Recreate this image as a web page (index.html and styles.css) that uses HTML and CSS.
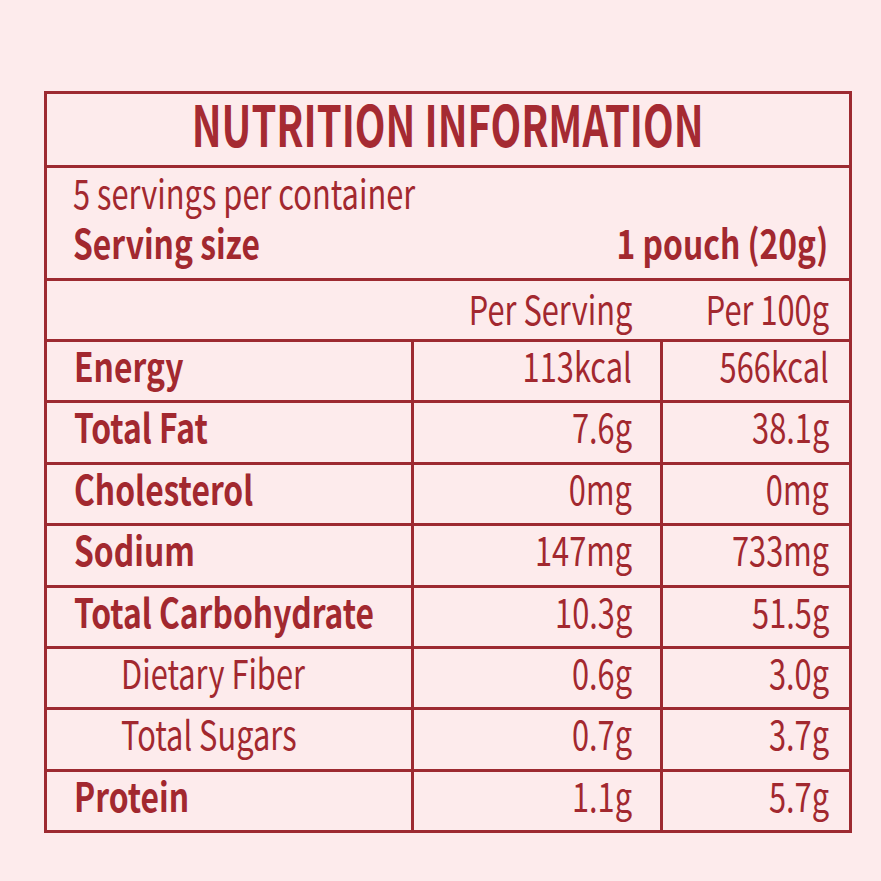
FILE: index.html
```html
<!DOCTYPE html>
<html lang="en">
<head>
<meta charset="utf-8">
<title>Nutrition Information</title>
<link rel="stylesheet" href="styles.css">
</head>
<body>
<main class="label">
  <h1 class="title"><span class="sq sq-center">NUTRITION INFORMATION</span></h1>
  <section class="serving">
    <p class="serving-line"><span class="sq">5 servings per container</span></p>
    <p class="serving-line size"><span class="sq strong">Serving size</span><span class="sq sq-right strong">1 pouch (20g)</span></p>
  </section>
  <div class="facts">
    <div class="cell head"></div>
    <div class="cell head num"><span class="sq sq-right">Per Serving</span></div>
    <div class="cell head num last"><span class="sq sq-right">Per 100g</span></div>

    <div class="cell name"><span class="sq strong">Energy</span></div>
    <div class="cell num line"><span class="sq sq-right">113kcal</span></div>
    <div class="cell num line last"><span class="sq sq-right">566kcal</span></div>

    <div class="cell name"><span class="sq strong">Total Fat</span></div>
    <div class="cell num line"><span class="sq sq-right">7.6g</span></div>
    <div class="cell num line last"><span class="sq sq-right">38.1g</span></div>

    <div class="cell name"><span class="sq strong">Cholesterol</span></div>
    <div class="cell num line"><span class="sq sq-right">0mg</span></div>
    <div class="cell num line last"><span class="sq sq-right">0mg</span></div>

    <div class="cell name"><span class="sq strong">Sodium</span></div>
    <div class="cell num line"><span class="sq sq-right">147mg</span></div>
    <div class="cell num line last"><span class="sq sq-right">733mg</span></div>

    <div class="cell name"><span class="sq strong">Total Carbohydrate</span></div>
    <div class="cell num line"><span class="sq sq-right">10.3g</span></div>
    <div class="cell num line last"><span class="sq sq-right">51.5g</span></div>

    <div class="cell name sub"><span class="sq">Dietary Fiber</span></div>
    <div class="cell num line"><span class="sq sq-right">0.6g</span></div>
    <div class="cell num line last"><span class="sq sq-right">3.0g</span></div>

    <div class="cell name sub"><span class="sq">Total Sugars</span></div>
    <div class="cell num line"><span class="sq sq-right">0.7g</span></div>
    <div class="cell num line last"><span class="sq sq-right">3.7g</span></div>

    <div class="cell name"><span class="sq strong">Protein</span></div>
    <div class="cell num line"><span class="sq sq-right">1.1g</span></div>
    <div class="cell num line last"><span class="sq sq-right">5.7g</span></div>
  </div>
</main>
</body>
</html>
```
FILE: styles.css
```css
html, body {
  margin: 0;
  padding: 0;
  background: #fdebec;
}

body {
  font-family: "Noto Sans CJK SC", "Noto Sans", sans-serif;
  color: #a2282f;
}

.label {
  box-sizing: border-box;
  width: 808px;
  margin: 91px 0 0 44px;
  border: 3px solid #9d2a31;
}

.sq {
  display: inline-block;
  white-space: nowrap;
  line-height: 1;
  transform: scaleX(0.77);
  transform-origin: left center;
}

.sq.strong {
  font-weight: 700;
  transform: scaleX(0.795);
}

.sq-right,
.sq.sq-right {
  transform-origin: right center;
}

.sq-center {
  transform-origin: center center;
}

.title {
  box-sizing: border-box;
  height: 71px;
  margin: 0;
  display: flex;
  justify-content: center;
  align-items: flex-start;
  font-size: 57px;
  line-height: 58px;
  font-weight: 700;
  color: #a52a32;
}

.title .sq {
  transform: scaleX(0.70);
}

.serving {
  box-sizing: border-box;
  height: 113px;
  border-top: 3px solid #9d2a31;
  padding: 0 21px 0 26px;
  font-size: 40px;
}

.serving-line {
  margin: 0;
  height: 48px;
  line-height: 48px;
}

.size {
  height: 52px;
  line-height: 52px;
  display: flex;
  justify-content: space-between;
  align-items: center;
}

.facts {
  display: grid;
  grid-template-columns: 364px 249px 189px;
  grid-template-rows: 61px repeat(8, 61.4px);
  font-size: 40px;
  line-height: 46px;
}

.cell {
  box-sizing: border-box;
  border-top: 3px solid #9d2a31;
}

.head {
  padding-top: 4px;
}

.name {
  padding-left: 27px;
}

.name.sub {
  padding-left: 74px;
}

.num {
  text-align: right;
  padding-right: 28px;
}

.num.last {
  padding-right: 20px;
}

.line {
  border-left: 3px solid #9d2a31;
}
```
